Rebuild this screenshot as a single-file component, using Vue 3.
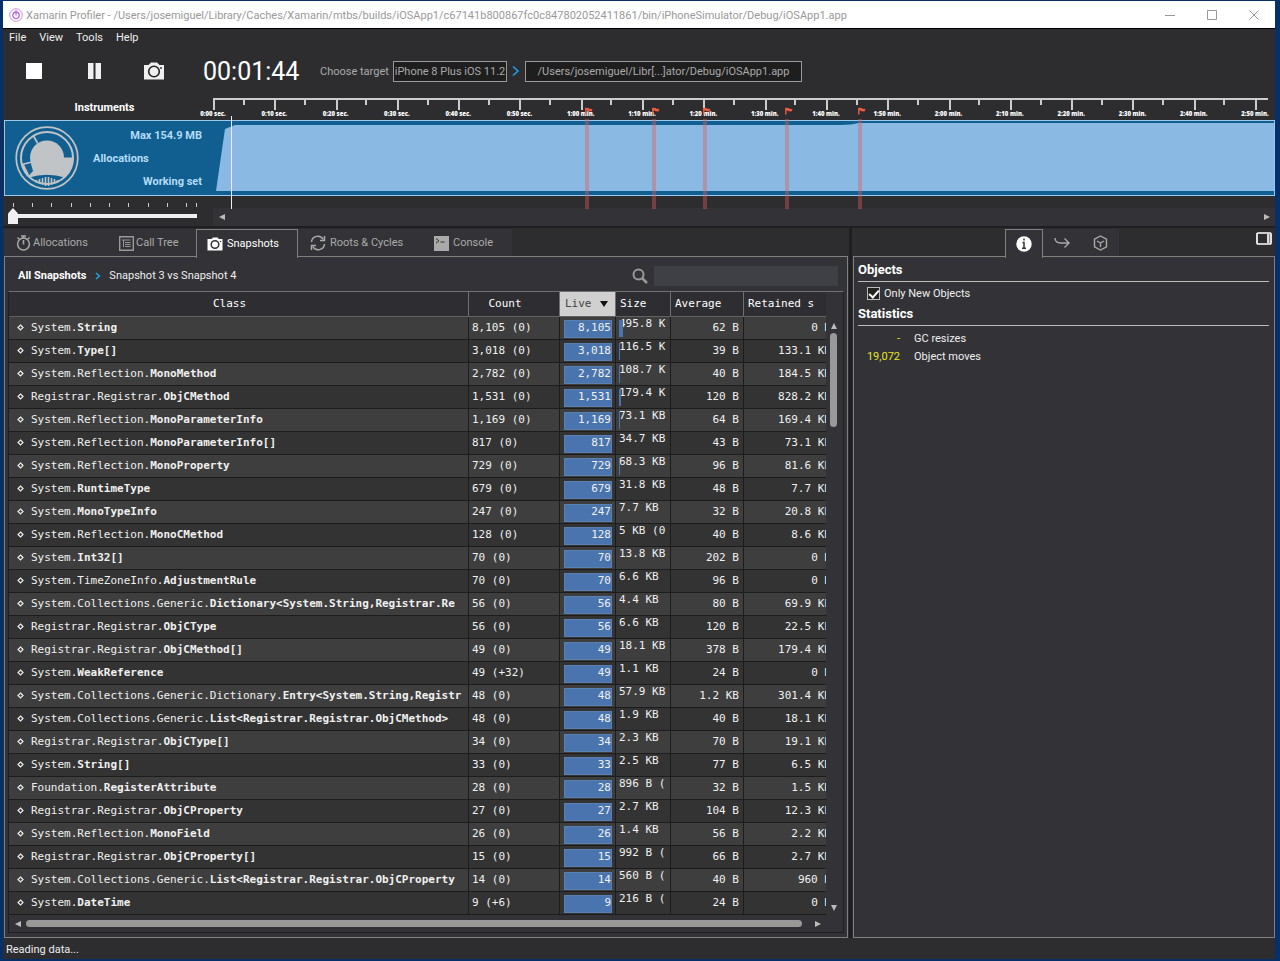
<script setup>
import { ref } from 'vue'

const menus = ['File', 'View', 'Tools', 'Help']
const onlyNew = ref(true)
const zoomLevel = ref(0)
const query = ref('')

const rulerLabels = [
  '0:00 sec.', '0:10 sec.', '0:20 sec.', '0:30 sec.', '0:40 sec.', '0:50 sec.',
  '1:00 min.', '1:10 min.', '1:20 min.', '1:30 min.', '1:40 min.', '1:50 min.',
  '2:00 min.', '2:10 min.', '2:20 min.', '2:30 min.', '2:40 min.', '2:50 min.'
]
// Snapshot positions in percent of the timeline width
const flags = [35, 41.3, 46.1, 53.9, 60.7]
const sliderTicks = [0, 10.5, 21, 31.5, 42, 52.5, 63, 73.5, 84, 94.5, 100]

const tabs = [
  { name: 'Allocations', icon: 'watch' },
  { name: 'Call Tree', icon: 'tree' },
  { name: 'Snapshots', icon: 'camera', active: true },
  { name: 'Roots & Cycles', icon: 'cycle' },
  { name: 'Console', icon: 'console' }
]

// namespace, type, count, live, size, average, retained, size bar width
const rows = [
  ['System.', 'String', '8,105 (0)', '8,105', '495.8 K', '62 B', '0 B', 4],
  ['System.', 'Type[]', '3,018 (0)', '3,018', '116.5 K', '39 B', '133.1 KB', 1],
  ['System.Reflection.', 'MonoMethod', '2,782 (0)', '2,782', '108.7 K', '40 B', '184.5 KB', 1],
  ['Registrar.Registrar.', 'ObjCMethod', '1,531 (0)', '1,531', '179.4 K', '120 B', '828.2 KB', 2],
  ['System.Reflection.', 'MonoParameterInfo', '1,169 (0)', '1,169', '73.1 KB', '64 B', '169.4 KB', 1],
  ['System.Reflection.', 'MonoParameterInfo[]', '817 (0)', '817', '34.7 KB', '43 B', '73.1 KB', 0],
  ['System.Reflection.', 'MonoProperty', '729 (0)', '729', '68.3 KB', '96 B', '81.6 KB', 1],
  ['System.', 'RuntimeType', '679 (0)', '679', '31.8 KB', '48 B', '7.7 KB', 0],
  ['System.', 'MonoTypeInfo', '247 (0)', '247', '7.7 KB', '32 B', '20.8 KB', 0],
  ['System.Reflection.', 'MonoCMethod', '128 (0)', '128', '5 KB (0', '40 B', '8.6 KB', 0],
  ['System.', 'Int32[]', '70 (0)', '70', '13.8 KB', '202 B', '0 B', 0],
  ['System.TimeZoneInfo.', 'AdjustmentRule', '70 (0)', '70', '6.6 KB', '96 B', '0 B', 0],
  ['System.Collections.Generic.', 'Dictionary<System.String,Registrar.Re', '56 (0)', '56', '4.4 KB', '80 B', '69.9 KB', 0],
  ['Registrar.Registrar.', 'ObjCType', '56 (0)', '56', '6.6 KB', '120 B', '22.5 KB', 0],
  ['Registrar.Registrar.', 'ObjCMethod[]', '49 (0)', '49', '18.1 KB', '378 B', '179.4 KB', 0],
  ['System.', 'WeakReference', '49 (+32)', '49', '1.1 KB', '24 B', '0 B', 0],
  ['System.Collections.Generic.Dictionary.', 'Entry<System.String,Registr', '48 (0)', '48', '57.9 KB', '1.2 KB', '301.4 KB', 0],
  ['System.Collections.Generic.', 'List<Registrar.Registrar.ObjCMethod>', '48 (0)', '48', '1.9 KB', '40 B', '18.1 KB', 0],
  ['Registrar.Registrar.', 'ObjCType[]', '34 (0)', '34', '2.3 KB', '70 B', '19.1 KB', 0],
  ['System.', 'String[]', '33 (0)', '33', '2.5 KB', '77 B', '6.5 KB', 0],
  ['Foundation.', 'RegisterAttribute', '28 (0)', '28', '896 B (', '32 B', '1.5 KB', 0],
  ['Registrar.Registrar.', 'ObjCProperty', '27 (0)', '27', '2.7 KB', '104 B', '12.3 KB', 0],
  ['System.Reflection.', 'MonoField', '26 (0)', '26', '1.4 KB', '56 B', '2.2 KB', 0],
  ['Registrar.Registrar.', 'ObjCProperty[]', '15 (0)', '15', '992 B (', '66 B', '2.7 KB', 0],
  ['System.Collections.Generic.', 'List<Registrar.Registrar.ObjCProperty', '14 (0)', '14', '560 B (', '40 B', '960 B', 0],
  ['System.', 'DateTime', '9 (+6)', '9', '216 B (', '24 B', '0 B', 0]
].map(([ns, type, count, live, size, avg, retained, bar]) => ({ ns, type, count, live, size, avg, retained, bar }))
</script>

<template>
  <div class="desktop">
    <div class="window">
      <header class="titlebar">
        <svg class="logo" viewBox="0 0 14 14" aria-hidden="true">
          <circle cx="7" cy="7" r="6.3" fill="none" stroke="#d48cf0" />
          <circle cx="7" cy="7.3" r="3.2" fill="none" stroke="#b455e0" stroke-width="1.2" />
          <path d="M7 4.8v2.7M5.8 3h2.4" stroke="#b455e0" stroke-width="1" />
        </svg>
        <span class="title">Xamarin Profiler - /Users/josemiguel/Library/Caches/Xamarin/mtbs/builds/iOSApp1/c67141b800867fc0c847802052411861/bin/iPhoneSimulator/Debug/iOSApp1.app</span>
        <div class="win-buttons">
          <button aria-label="Minimize"><svg viewBox="0 0 10 10"><path d="M0 5.5h10" /></svg></button>
          <button aria-label="Maximize"><svg viewBox="0 0 10 10"><path d="M.5 .5h9v9h-9z" /></svg></button>
          <button aria-label="Close"><svg viewBox="0 0 10 10"><path d="M.5 .5l9 9M9.5 .5l-9 9" /></svg></button>
        </div>
      </header>

      <nav class="menubar">
        <button v-for="m in menus" :key="m">{{ m }}</button>
      </nav>

      <div class="toolbar">
        <div class="controls">
          <button aria-label="Stop"><svg width="16" height="16" viewBox="0 0 16 16"><path d="M0 0h16v16H0z" fill="#fff" /></svg></button>
          <button aria-label="Pause"><svg width="14" height="16" viewBox="0 0 14 16"><path d="M0 0h5.5v16H0zM7.5 0H13v16H7.5z" fill="#f0f0f0" /></svg></button>
          <button aria-label="Take snapshot">
            <svg width="22" height="18" viewBox="0 0 22 18">
              <path d="M1 3h4.5L8 .5h6L16.5 3H21v14.500H1z" fill="#f0f0f0" />
              <circle cx="11" cy="9.500" r="5.300" fill="#f0f0f0" stroke="#252527" stroke-width="1.600" />
              <circle cx="18" cy="6" r=".9" fill="#252527" />
            </svg>
          </button>
        </div>
        <time class="clock">00:01:44</time>
        <span class="choose">Choose target</span>
        <button class="target">iPhone 8 Plus iOS 11.2</button>
        <svg class="chevron" width="8" height="12" viewBox="0 0 8 12"><path d="M1 1.500l5 4.500-5 4.500" /></svg>
        <button class="target path">/Users/josemiguel/Libr[...]ator/Debug/iOSApp1.app</button>
      </div>

      <section class="timeline">
        <div class="instruments">
          <h2>Instruments</h2>
          <div class="instrument">
            <svg class="gauge" viewBox="0 0 64 64" aria-hidden="true">
              <circle cx="32" cy="32" r="30.800" fill="none" stroke="#c0c4c6" stroke-width="1.700" />
              <circle cx="32" cy="32" r="26" fill="none" stroke="#c0c4c6" stroke-width="2" />
              <circle cx="32" cy="31.500" r="17" fill="#c0c4c6" />
              <path d="M32 31.500H58.500A26.500 26.500 0 0 1 50 51.500Q32 46 14 51.500L13 50.500L18 45L16 38L30 32Z" fill="#c0c4c6" />
              <path d="M22.500 17L18.500 10M7 38.500l10-2.500" stroke="#c0c4c6" stroke-width="1.700" />
              <path d="M6.500 39l2.500-.5 5 10-2 2z" fill="#c0c4c6" />
              <path d="M21.500 54v2.500M24.500 53v4.500M27.500 52v6.500M30.500 51v9M33.500 51v9M36.500 52v6.500M39.500 53v4.500M42.500 54v2.500" stroke="#c0c4c6" stroke-width="1.600" />
            </svg>
            <div class="readings">
              <span class="end">Max 154.9 MB</span>
              <span>Allocations</span>
              <span class="end">Working set</span>
            </div>
          </div>
          <div class="zoom">
            <div class="zoom-ticks"><i v-for="t in sliderTicks" :key="t" :style="{ left: t + '%' }"></i></div>
            <input v-model="zoomLevel" type="range" min="0" max="10" aria-label="Timeline zoom" />
          </div>
        </div>

        <div class="chart-side">
          <div class="ruler">
            <div v-for="l in rulerLabels" :key="l" class="tick"><span>{{ l }}</span></div>
          </div>
          <svg class="chart" viewBox="0 0 1062 75" preserveAspectRatio="none">
            <path d="M3 71L12 8L22 4H628Q640 4 646 2H1062V71Z" fill="#8abae3" />
          </svg>
          <div class="gap"></div>
          <div class="time-scroll">
            <button aria-label="Scroll left"><svg width="6" height="8" viewBox="0 0 6 8"><path d="M6 1v6L0 4z" /></svg></button>
            <button aria-label="Scroll right"><svg width="6" height="8" viewBox="0 0 6 8"><path d="M0 1v6l6-3z" /></svg></button>
          </div>
          <div class="overlay">
            <div class="playhead"></div>
            <div v-for="f in flags" :key="f" class="flag" :style="{ left: f + '%' }">
              <svg width="8" height="8" viewBox="0 0 8 8"><path d="M.8 1v6.500" stroke="#f05a40" stroke-width="1.400" /><path d="M.5 .8l3 .2 1 .8 3 .2-1 2.500-3-.2-1-.8H.5z" fill="#f05a40" /></svg>
            </div>
          </div>
        </div>
      </section>

      <main class="panes">
        <section class="pane">
          <div class="tabs" role="tablist">
            <button v-for="t in tabs" :key="t.name" role="tab" :aria-selected="!!t.active" :class="['tab', t.icon, { active: t.active }]">
              <svg v-if="t.icon === 'watch'" width="15" height="16" viewBox="0 0 15 16"><g fill="none" stroke="#aaa" stroke-width="1.500"><circle cx="7.500" cy="9" r="5.900" /><path d="M5 1h5M7.500 5v4.500M7.500 1v2M12 4l1.500-1.500M3 4L1.500 2.500" /></g></svg>
              <svg v-else-if="t.icon === 'tree'" width="15" height="15" viewBox="0 0 15 15"><path d="M.7 .7h13.600v13.600H.7z" fill="none" stroke="#999" stroke-width="1.400" /><path d="M3 4h8.500M6 6.500h5.500M6 8.500h5.500M6 10.500h5.500M4.500 4v7" fill="none" stroke="#999" /></svg>
              <svg v-else-if="t.icon === 'camera'" width="16" height="14" viewBox="0 0 16 14"><path d="M.5 2h4L6 .5h4.500L12 2h3.500v11.500H.5z" fill="#fff" /><circle cx="8" cy="7.500" r="3.800" fill="#fff" stroke="#333" stroke-width="1.500" /><circle cx="13.500" cy="4.500" r=".7" fill="#333" /></svg>
              <svg v-else-if="t.icon === 'cycle'" width="16" height="16" viewBox="0 0 16 16"><g fill="none" stroke="#aaa" stroke-width="1.500"><path d="M1.500 7a6.300 6.300 0 0 1 11.800-2.500M14.500 9A6.300 6.300 0 0 1 2.700 11.500" /><path d="M14.500 1v4.500H10M1.500 15v-4.500H6" /></g></svg>
              <svg v-else width="15" height="15" viewBox="0 0 15 15"><path d="M0 0h15v15H0z" fill="#aaa" /><path d="M2 2.500l3 2.300-3 2.300M6.500 6h4" fill="none" stroke="#333" /></svg>
              {{ t.name }}
            </button>
          </div>
          <div class="panel">
            <div class="crumbs">
              <a href="#">All Snapshots</a>
              <svg class="chevron" width="6" height="8" viewBox="0 0 8 12"><path d="M1 1.500l5 4.500-5 4.500" /></svg>
              <span>Snapshot 3 vs Snapshot 4</span>
              <label class="search">
                <svg width="16" height="16" viewBox="0 0 16 16"><circle cx="6.500" cy="6.500" r="5" fill="none" stroke="#999" stroke-width="2" /><path d="M10 10l5 5" stroke="#999" stroke-width="2.500" /></svg>
                <input v-model="query" type="text" aria-label="Search" />
              </label>
            </div>
            <div class="gridbox">
              <div class="table-wrap">
                <table>
                  <colgroup><col /><col class="c-count" /><col class="c-live" /><col class="c-size" /><col class="c-avg" /><col class="c-ret" /></colgroup>
                  <thead>
                    <tr><th class="mid">Class</th><th class="mid">Count</th><th class="sorted">Live <i></i></th><th>Size</th><th>Average</th><th>Retained s</th></tr>
                  </thead>
                  <tbody>
                    <tr v-for="(r, i) in rows" :key="i">
                      <td class="class"><svg width="7" height="7" viewBox="0 0 7 7"><path d="M3.500 1L6 3.500 3.500 6 1 3.500z" fill="none" stroke="#eee" stroke-width="1.200" /></svg>{{ r.ns }}<b>{{ r.type }}</b></td>
                      <td>{{ r.count }}</td>
                      <td class="live"><span>{{ r.live }}</span></td>
                      <td class="size"><span>{{ r.size }}</span><i :style="{ width: r.bar + 'px' }"></i></td>
                      <td class="num">{{ r.avg }}</td>
                      <td class="num">{{ r.retained }}</td>
                    </tr>
                  </tbody>
                </table>
              </div>
              <div class="vscroll">
                <svg width="6" height="6" viewBox="0 0 6 6"><path d="M0 6h6L3 0z" /></svg>
                <div class="vtrack"><div class="vthumb"></div></div>
                <svg width="6" height="6" viewBox="0 0 6 6"><path d="M0 0h6L3 6z" /></svg>
              </div>
              <div class="hscroll">
                <svg width="6" height="6" viewBox="0 0 6 6"><path d="M6 0v6L0 3z" /></svg>
                <div class="htrack"><div class="hthumb"></div></div>
                <svg width="6" height="6" viewBox="0 0 6 6"><path d="M0 0v6l6-3z" /></svg>
              </div>
            </div>
          </div>
        </section>

        <div class="splitter"></div>

        <section class="pane">
          <div class="tabs info-tabs" role="tablist">
            <button class="tab active" role="tab" aria-selected="true" aria-label="Info"><svg width="16" height="16" viewBox="0 0 16 16"><circle cx="8" cy="8" r="7.700" fill="#fff" /><path d="M8 2.500v2M6.500 6.500H8v5.500M6 12.300h4" fill="none" stroke="#333" stroke-width="1.500" /></svg></button>
            <button class="tab" role="tab" aria-selected="false" aria-label="References"><svg width="16" height="12" viewBox="0 0 16 12"><path d="M1 1c0 4 3 5 6 5h8M10.500 1.500L15 6l-4.500 4.500" fill="none" stroke="#aaa" stroke-width="1.400" /></svg></button>
            <button class="tab" role="tab" aria-selected="false" aria-label="Object"><svg width="15" height="16" viewBox="0 0 15 16"><path d="M7.500 1l6 3.200v7.600l-6 3.200-6-3.200V4.200zM4 6l3.500 2L11 6M7.500 8v4" fill="none" stroke="#aaa" stroke-width="1.400" /></svg></button>
            <button class="toggle" aria-label="Toggle side pane"><svg width="16" height="13" viewBox="0 0 16 13"><rect x="1" y="1" width="14" height="11" rx="1" fill="none" stroke="#fff" stroke-width="1.700" /><path d="M11 2h2.500v9H11z" fill="#ddd" /></svg></button>
          </div>
          <div class="panel info">
            <h3>Objects</h3>
            <label class="check"><input v-model="onlyNew" type="checkbox" /><span>Only New Objects</span></label>
            <h3>Statistics</h3>
            <dl>
              <dt>-</dt><dd>GC resizes</dd>
              <dt>19,072</dt><dd>Object moves</dd>
            </dl>
          </div>
        </section>
      </main>

      <footer class="status">Reading data...</footer>
    </div>
  </div>
</template>

<style>
body { background: #062b5c; }
</style>

<style scoped>
* { box-sizing: border-box; }
button, input { font: inherit; color: inherit; border: 0; background: none; padding: 0; margin: 0; }
h2, h3, dl, dd { margin: 0; }
svg { display: block; flex: none; }
.desktop { min-height: 100vh; display: flex; padding: 1px 5px 3px 3px; background: #06306a; font: 11px/16px Roboto, "Open Sans", sans-serif; color: #eee; }
.window { flex: 1; min-width: 0; display: flex; flex-direction: column; background: #2d2d30; }
.titlebar { display: flex; align-items: center; height: 28px; background: #fff; border-bottom: 1px solid #000; color: #999; padding-left: 6px; gap: 3px; }
.logo { width: 14px; height: 14px; }
.title { flex: 1; min-width: 0; white-space: nowrap; overflow: hidden; padding-top: 2px; }
.win-buttons { display: flex; }
.win-buttons button { width: 42px; height: 26px; display: flex; align-items: center; justify-content: center; }
.win-buttons svg { width: 10px; height: 10px; fill: none; stroke: #999; stroke-width: 1; }
.menubar { display: flex; gap: 13px; padding: 1px 6px 0; height: 17px; }
.toolbar { display: flex; align-items: center; height: 50px; margin-bottom: 1px; color: #aaa; }
.controls { display: flex; align-items: center; width: 200px; padding-left: 22px; }
.controls button { width: 60px; display: flex; }
.controls button:nth-child(1) { padding-left: 1px; }
.controls button:nth-child(2) { padding-left: 3px; width: 58px; }
.clock { width: 117px; color: #fff; font-size: 25px; line-height: 30px; padding-top: 2px; }
.choose { width: 73px; white-space: nowrap; padding-top: 1px; }
.target { height: 21px; padding-top: 1px; border: 1px solid #999; background: #1e1e1e; white-space: nowrap; width: 114px; }
.target.path { width: 277px; }
.chevron { fill: none; stroke: #1ba1e8; stroke-width: 1.6; margin: 0 5px; }
.timeline { display: grid; grid-template-columns: 209px 1fr; height: 131px; padding-left: 1px; border-bottom: 2px solid #1f1f21; }
.instruments { display: flex; flex-direction: column; }
.instruments h2 { height: 23px; font-size: 11px; line-height: 22px; text-align: center; padding-right: 8px; color: #fff; }
.instrument { display: flex; align-items: center; height: 76px; padding-left: 10px; background: #115f90; border: 1px solid #9cc8ec; border-right: 0; color: #b3dcf8; font-weight: 700; }
.gauge { width: 64px; height: 64px; }
.readings { flex: 1; display: flex; flex-direction: column; gap: 7px; padding: 1px 11px 0 14px; }
.end { text-align: right; }
.zoom { padding: 7px 16px 0 4px; }
.zoom-ticks { position: relative; height: 5px; margin: 0 1px 0 5px; }
.zoom-ticks i { position: absolute; top: 0; width: 1px; height: 4px; background: #ccc; }
.zoom input { appearance: none; width: 100%; height: 16px; display: block; }
.zoom input::-webkit-slider-runnable-track { height: 16px; background: linear-gradient(#eee, #eee) center / 100% 4px no-repeat; }
.zoom input::-webkit-slider-thumb { appearance: none; width: 10px; height: 16px; background: #f0f0f0; clip-path: polygon(50% 0, 100% 35%, 100% 100%, 0 100%, 0 35%); }
.chart-side { position: relative; display: flex; flex-direction: column; }
.ruler { display: flex; height: 23px; padding: 1px 7px 0 0; }
.tick { flex: 1; position: relative; height: 12px; border-top: 2px solid #ccc; background: linear-gradient(#ccc, #ccc) left / 2px 100% no-repeat, linear-gradient(#ccc, #ccc) top / 2px 5px no-repeat; }
.tick:last-child { flex: none; width: 13px; background: linear-gradient(#ccc, #ccc) left / 2px 100% no-repeat; }
.tick span { position: absolute; top: 9px; left: 0; transform: translateX(-50%); font: 800 6px/10px "Open Sans", "Noto Sans", sans-serif; white-space: nowrap; color: #fff; }
.chart { width: 100%; height: 76px; background: #115f90; border: solid #9cc8ec; border-width: 1px 1px 1px 0; }
.gap { flex: 1; }
.time-scroll { height: 18px; background: #333337; display: flex; align-items: center; justify-content: space-between; padding: 0 5px 0 6px; }
.time-scroll path, .vscroll path, .hscroll path { fill: #bbb; }
.overlay { position: absolute; inset: 10px 0 17px 0; pointer-events: none; }
.playhead { position: absolute; left: 18px; top: 9px; bottom: 0; width: 1px; background: #eee; }
.flag { position: absolute; top: 0; bottom: 0; width: 4px; background: linear-gradient(rgba(222, 90, 90, .4), rgba(222, 90, 90, .4)) 0 12px no-repeat; }
.panes { flex: 1; display: grid; grid-template-columns: 2fr 5px 1fr; padding-left: 1px; }
.pane { min-width: 0; display: flex; flex-direction: column; }
.splitter { background: #1f1f21; border: solid #2d2d30; border-width: 0 1px; }
.tabs { display: flex; height: 29px; padding-top: 1px; color: #aaa; }
.tab { display: flex; align-items: center; gap: 2px; background: #333337; padding: 0 0 0 12px; height: 28px; white-space: nowrap; }
.tab.watch { width: 103px; }
.tab.tree { width: 89px; }
.tab.camera { width: 102px; padding-left: 10px; gap: 4px; }
.tab.cycle { width: 125px; gap: 4px; }
.tab.console { width: 89px; gap: 4px; padding-left: 11px; }
.tab.active { position: relative; z-index: 1; height: 29px; border: 1px solid #808080; border-bottom: 0; color: #fff; }
.panel { flex: 1; margin-top: -1px; border: 1px solid #808080; background: #333337; display: flex; flex-direction: column; padding: 0 3px 4px; }
.crumbs { display: flex; align-items: center; height: 34px; padding: 4px 6px 0 10px; white-space: nowrap; }
.crumbs a { color: #fff; font-weight: 700; text-decoration: none; }
.crumbs .chevron { margin: 0 8px 0 9px; stroke-width: 2.4; }
.search { margin-left: auto; display: flex; align-items: center; gap: 6px; }
.search input { width: 184px; height: 20px; background: #3f3f46; }
.gridbox { flex: 1; display: grid; grid-template: 1fr 17px / 1fr 17px; border: 1px solid #202022; border-top-color: #707070; }
.table-wrap { overflow: hidden; min-width: 0; }
table { table-layout: fixed; width: calc(100% + 10px); border-collapse: separate; border-spacing: 0; font: 11px/16px "DejaVu Sans Mono", "Liberation Mono", monospace; color: #f0f0f0; }
.c-count { width: 91px; } .c-live { width: 56px; } .c-size { width: 55px; } .c-avg { width: 73px; } .c-ret { width: 92px; }
th { height: 25px; padding: 0 4px; text-align: left; font-weight: 400; background: #2d2d32; border-right: 1px solid #707070; border-bottom: 1px solid #606060; color: #fff; white-space: nowrap; }
th.mid { text-align: center; padding-right: 22px; }
th.sorted { background: #d0d0d0; color: #444; padding-left: 5px; }
th.sorted i { display: inline-block; margin-left: 2px; border: solid transparent; border-width: 6px 4px 0; border-top-color: #111; }
td { height: 23px; padding: 0 3px; overflow: hidden; white-space: nowrap; border-right: 1px solid #1c1c1c; border-bottom: 1px solid #1c1c1c; }
tbody tr:nth-child(odd) { background: #3e3e3e; }
tbody tr:nth-child(even) { background: #333; }
.class svg { display: inline-block; margin: 0 7px 0 5px; }
.live { padding: 3px 3px 1px 4px; }
.live span { display: block; height: 18px; line-height: 13px; background: #4a74ad; border: 1px solid #5b80b0; text-align: right; }
.size { position: relative; vertical-align: top; padding-right: 0; }
.size span { display: block; line-height: 14px; }
.size i { position: absolute; left: 3px; top: 3px; height: 17px; background: #4a74ad; }
.num { text-align: right; padding-right: 4px; }
.vscroll { display: flex; flex-direction: column; align-items: center; padding: 31px 2px 4px 0; gap: 4px; }
.vtrack { flex: 1; width: 7px; }
.vthumb { height: 94px; border-radius: 4px; background: #999; }
.hscroll { display: flex; align-items: center; padding: 0 5px 0 6px; gap: 5px; }
.htrack { flex: 1; }
.hthumb { width: 99%; height: 7px; border-radius: 4px; background: #999; }
.toggle { margin: 3px 3px auto auto; }
.info-tabs { padding-left: 152px; }
.info-tabs .tab { width: 38px; padding: 0; justify-content: center; }
.info { padding: 4px 5px 4px 4px; }
.info h3 { font-size: 13px; line-height: 18px; height: 21px; border-bottom: 1px solid #bbb; color: #fff; }
.check { display: flex; align-items: center; gap: 4px; height: 23px; padding-left: 9px; }
.check input { appearance: none; width: 13px; height: 13px; border: 1px solid #bbb; background: #222; display: grid; place-items: center; }
.check input:checked::after { content: ""; width: 4px; height: 8px; margin-bottom: 2px; border: solid #fff; border-width: 0 2px 2px 0; transform: rotate(42deg); }
dl { display: grid; grid-template-columns: 42px 1fr; column-gap: 14px; row-gap: 2px; padding-top: 5px; }
dt { text-align: right; color: #e5e51e; }
.status { height: 21px; line-height: 23px; padding-left: 3px; }
</style>
